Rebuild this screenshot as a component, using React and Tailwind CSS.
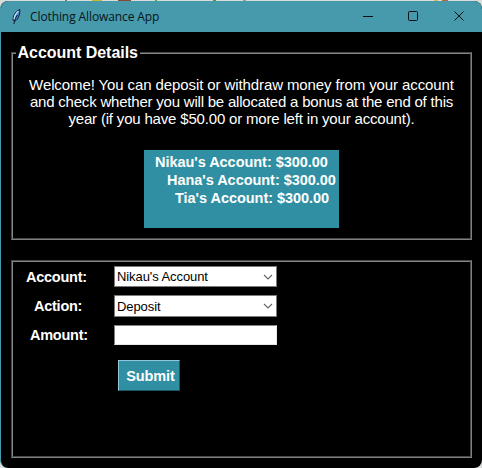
const arial = "font-['Liberation_Sans',Arial,sans-serif]";

function Groove({ className, children }) {
  return (
    <section className={`border border-t-[#484848] border-l-[#484848] border-r-[#808080] border-b-[#808080] ${className}`}>
      <div className="h-full border border-t-[#868686] border-l-[#868686] border-r-[#484848] border-b-[#484848]">
        {children}
      </div>
    </section>
  );
}

function Feather() {
  return (
    <svg className="h-[18px] w-[12px] shrink-0" viewBox="0 0 12 18">
      <path d="M8.8 1.5 C5.5 2.6 2.2 6.4 2 12 L3.8 13.4 C6.8 11.4 9.3 7 8.8 1.5Z" fill="#4a80cf" stroke="#0b1420" strokeWidth="0.9" />
      <path d="M7.4 3.2 C5 5.2 3.4 8.5 3.1 11.4" fill="none" stroke="#bcdcf8" strokeWidth="1.4" />
      <path d="M6.4 7 C4.6 9.5 3.4 12.5 2.9 16" fill="none" stroke="#10131a" strokeWidth="0.9" />
    </svg>
  );
}

function Select({ value, className }) {
  return (
    <div className={`flex w-[163px] items-center justify-between border border-[#7a7a7a] bg-white pr-[3px] pl-[2px] text-[13px] leading-none tracking-[-0.08px] text-black ${className}`}>
      <span className="whitespace-nowrap">{value}</span>
      <svg className="h-[6px] w-[10px]" viewBox="0 0 10 6">
        <path d="M1 1 L5 5 L9 1" fill="none" stroke="#666" strokeWidth="1.1" />
      </svg>
    </div>
  );
}

export default function App() {
  return (
    <div className={`h-[468px] w-[482px] overflow-hidden bg-[#d9dcda] ${arial}`}>
      <div className="flex h-px w-full">
        <i className="ml-[65px] h-px w-[2px] bg-[#777]" />
        <i className="ml-[25px] h-px w-[10px] bg-[#c9b92b]" />
        <i className="ml-[16px] h-px w-[13px] bg-[#8a4a32]" />
        <i className="ml-[24px] h-px w-[2px] bg-[#35bd35]" />
        <i className="ml-[56px] h-px w-[3px] bg-[#35a535]" />
        <i className="ml-[27px] h-px w-[3px] bg-[#999]" />
        <i className="ml-[188px] h-px w-[4px] bg-[#d0bd45]" />
        <i className="ml-[4px] h-px w-[6px] bg-[#b26648]" />
      </div>
      <div className="h-[467px] overflow-hidden rounded-[8px] border-l border-[#469aac] bg-black">
        <header className="flex h-[31px] items-center bg-[#469aac] text-[#071418]">
          <div className="flex flex-1 items-center pl-[10px]">
            <Feather />
            <span className="ml-[7px] font-['Open_Sans','Noto_Sans',sans-serif] text-[12px] leading-[16px] tracking-[-0.1px] whitespace-nowrap">Clothing Allowance App</span>
          </div>
          <svg className="mr-[16px] mb-px h-[12px] w-[104px]" viewBox="0 0 104 12" fill="none" stroke="#0a1114" strokeWidth="1">
            <path d="M1 6.5H11" />
            <rect x="46.5" y="1.5" width="9" height="9" rx="1" />
            <path d="M92.5 1.5L101.5 10.5M101.5 1.5L92.5 10.5" />
          </svg>
        </header>

        <main className="pt-[20px] pl-[10px] text-white">
          <Groove className="h-[188px] w-[461px]">
            <h1 className="-mt-[10px] ml-[3px] h-[20px] w-fit bg-black pr-[2px] pl-[1.5px] text-[16px] leading-[18px] font-bold tracking-[-0.03px] whitespace-nowrap">Account Details</h1>
            <div className="mt-[12px] text-center text-[15px] leading-[17px] whitespace-nowrap">
              <p className="tracking-[-0.1px]">Welcome! You can deposit or withdraw money from your account</p>
              <p className="tracking-[-0.21px]">and check whether you will be allocated a bonus at the end of this</p>
              <p className="tracking-[-0.18px]">year (if you have $50.00 or more left in your account).</p>
            </div>
            <div className="mt-[23px] ml-[131px] h-[78px] w-[195px] bg-[#308fa3] pt-[3px] text-[14.5px] leading-[18px] font-bold tracking-[-0.04px] whitespace-nowrap">
              <div className="pl-[11px]">Nikau's Account: $300.00</div>
              <div className="pl-[23px]">Hana's Account: $300.00</div>
              <div className="pl-[31px]">Tia's Account: $300.00</div>
            </div>
          </Groove>

          <Groove className="mt-[20px] h-[198px] w-[461px]">
            <div className="flex pt-[3px]">
              <div className="-mt-[2px] flex w-[101px] flex-col text-[14.5px] leading-[29px] font-bold tracking-[-0.25px]">
                <span className="pl-[13px]">Account:</span>
                <span className="pl-[21px]">Action:</span>
                <span className="pl-[17px]">Amount:</span>
              </div>
              <div className="flex flex-col pt-px">
                <Select value="Nikau's Account" className="h-[21px]" />
                <Select value="Deposit" className="mt-[8px] h-[22px]" />
                <div className="mt-[8px] h-[20px] w-[163px] border border-t-[#808080] border-l-[#808080] border-r-[#e8e8e8] border-b-[#e8e8e8] bg-white" />
                <div className="mt-[15px] ml-[4px] flex h-[31px] w-[62px] items-center justify-center border border-t-[#92c6dc] border-l-[#92c6dc] border-r-[#1c5663] border-b-[#1c5663] bg-[#308fa3] pt-[2px] pl-[3px] text-[14.5px] leading-none font-bold tracking-[-0.1px]">Submit</div>
              </div>
            </div>
          </Groove>
        </main>
      </div>
    </div>
  );
}
